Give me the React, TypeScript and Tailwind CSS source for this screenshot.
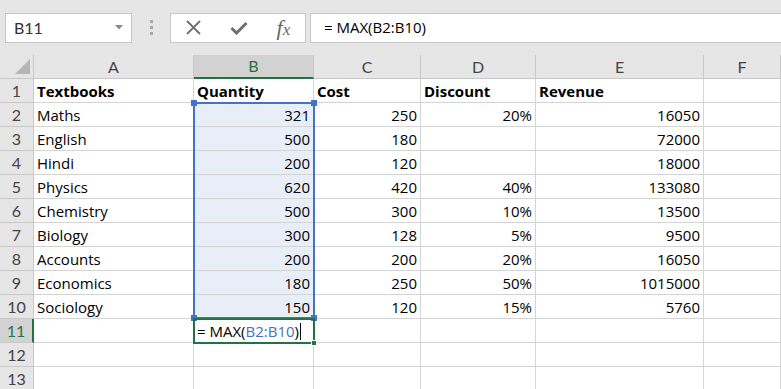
import React from "react";

const cols = ["A", "B", "C", "D", "E", "F"];
const widths = "grid-cols-[34px_160px_120px_107px_115px_168px_1fr]";

type Row = [string, string, string, string, string];
const data: Row[] = [
  ["Maths", "321", "250", "20%", "16050"],
  ["English", "500", "180", "", "72000"],
  ["Hindi", "200", "120", "", "18000"],
  ["Physics", "620", "420", "40%", "133080"],
  ["Chemistry", "500", "300", "10%", "13500"],
  ["Biology", "300", "128", "5%", "9500"],
  ["Accounts", "200", "200", "20%", "16050"],
  ["Economics", "180", "250", "50%", "1015000"],
  ["Sociology", "150", "120", "15%", "5760"],
];

const cellBase = "h-[24px] border-r border-b border-[#d4d4d4] flex items-center overflow-hidden whitespace-nowrap text-[15px] text-black font-['Open_Sans',sans-serif] pt-[1px]";

function RowHeader({ n, active }: { n: number; active?: boolean }) {
  return (
    <div
      className={
        "h-[24px] border-b border-[#c8c8c8] flex items-center justify-center text-[16px] " +
        (active
          ? "bg-[#d2d2d2] text-[#217346] border-r-2 border-r-[#217346]"
          : "bg-[#e6e6e6] text-[#444] border-r border-r-[#c8c8c8]")
      }
    >
      {n}
    </div>
  );
}

export default function App() {
  return (
    <div className="w-[781px] h-[389px] overflow-hidden bg-white font-['Lato','Noto_Sans',sans-serif]">
      {/* Formula bar */}
      <div className="h-[55px] bg-[#e6e6e6] flex items-center pl-[5px]">
        <div className="w-[127px] h-[30px] bg-white border border-[#c6c6c6] flex items-center justify-between pl-[8px] pr-[8px]">
          <span className="text-[16px] text-[#333]">B11</span>
          <svg width="8" height="5" viewBox="0 0 8 5"><path d="M0 0h8L4 4.5z" fill="#8a8a8a" /></svg>
        </div>
        <div className="w-[38px] flex flex-col items-center gap-[3px]">
          <span className="w-[3px] h-[3px] bg-[#a8a8a8]" />
          <span className="w-[3px] h-[3px] bg-[#a8a8a8]" />
          <span className="w-[3px] h-[3px] bg-[#a8a8a8]" />
        </div>
        <div className="w-[136px] h-[30px] bg-white border border-[#c6c6c6] flex items-center">
          <div className="w-[46px] flex justify-center">
            <svg width="15" height="15" viewBox="0 0 15 15"><path d="M1 1L14 14M14 1L1 14" stroke="#6f6f6f" strokeWidth="1.8" /></svg>
          </div>
          <div className="w-[46px] flex justify-center">
            <svg width="18" height="14" viewBox="0 0 18 14"><path d="M1.5 7L6.5 12L16.5 2" stroke="#6f6f6f" strokeWidth="3" fill="none" /></svg>
          </div>
          <div className="w-[44px] flex justify-center">
            <span className="font-['Liberation_Serif',serif] italic text-[22px] text-[#666] leading-none">
              f<span className="text-[17px]">x</span>
            </span>
          </div>
        </div>
        <div className="ml-[4px] flex-1 h-[30px] bg-white border border-r-0 border-[#c6c6c6] flex items-center pl-[13px] text-[15px] text-black font-['Open_Sans',sans-serif]">
          = MAX(B2:B10)
        </div>
      </div>

      {/* Grid */}
      <div className="relative">
        <div className={"grid " + widths}>
          {/* corner */}
          <div className="h-[24px] bg-[#e6e6e6] border-r border-b border-[#c8c8c8] flex items-end justify-end pr-[3px] pb-[4px]">
            <svg width="15" height="15" viewBox="0 0 15 15"><path d="M15 0V15H0z" fill="#b5b5b5" /></svg>
          </div>
          {cols.map((c) =>
            c === "B" ? (
              <div key={c} className="h-[24px] bg-[#d2d2d2] border-r border-[#c8c8c8] border-b-2 border-b-[#217346] flex items-center justify-center text-[16px] text-[#217346]">
                {c}
              </div>
            ) : (
              <div key={c} className="h-[24px] bg-[#e6e6e6] border-r border-b border-[#c8c8c8] flex items-center justify-center text-[16px] text-[#444]">
                {c}
              </div>
            )
          )}

          {/* row 1 */}
          <RowHeader n={1} />
          <div className={cellBase + " pl-[3px] font-bold"}>Textbooks</div>
          <div className={cellBase + " pl-[3px] font-bold"}>Quantity</div>
          <div className={cellBase + " pl-[3px] font-bold"}>Cost</div>
          <div className={cellBase + " pl-[3px] font-bold"}>Discount</div>
          <div className={cellBase + " pl-[3px] font-bold"}>Revenue</div>
          <div className={cellBase}></div>

          {data.map((r, i) => (
            <React.Fragment key={i}>
              <RowHeader n={i + 2} />
              <div className={cellBase + " pl-[3px]"}>{r[0]}</div>
              <div className={cellBase + " justify-end pr-[3px] bg-[#e8eef8]"}>{r[1]}</div>
              <div className={cellBase + " justify-end pr-[3px]"}>{r[2]}</div>
              <div className={cellBase + " justify-end pr-[3px]"}>{r[3]}</div>
              <div className={cellBase + " justify-end pr-[3px]"}>{r[4]}</div>
              <div className={cellBase}></div>
            </React.Fragment>
          ))}

          {/* row 11 */}
          <RowHeader n={11} active />
          <div className={cellBase}></div>
          <div className={cellBase + " pl-[3px]"}>
            = MAX(<span className="text-[#4472c4]">B2:B10</span>)<span className="inline-block w-[1px] h-[17px] bg-black ml-[1px]" />
          </div>
          <div className={cellBase}></div>
          <div className={cellBase}></div>
          <div className={cellBase}></div>
          <div className={cellBase}></div>

          {[12, 13].map((n) => (
            <React.Fragment key={n}>
              <RowHeader n={n} />
              <div className={cellBase}></div>
              <div className={cellBase}></div>
              <div className={cellBase}></div>
              <div className={cellBase}></div>
              <div className={cellBase}></div>
              <div className={cellBase}></div>
            </React.Fragment>
          ))}
        </div>

        {/* selection overlay B2:B10 */}
        <div className="absolute left-[193px] top-[47px] w-[122px] h-[217px] border-2 border-[#4472c4] pointer-events-none">
          <span className="absolute -left-[4px] -top-[4px] w-[6px] h-[6px] bg-[#4472c4]" />
          <span className="absolute -right-[4px] -top-[4px] w-[6px] h-[6px] bg-[#4472c4]" />
          <span className="absolute -left-[4px] -bottom-[4px] w-[6px] h-[6px] bg-[#4472c4]" />
          <span className="absolute -right-[4px] -bottom-[4px] w-[6px] h-[6px] bg-[#4472c4]" />
        </div>
        {/* active cell B11 */}
        <div className="absolute left-[193px] top-[263px] w-[122px] h-[26px] border-2 border-[#217346] pointer-events-none">
          <span className="absolute -right-[4px] -bottom-[4px] w-[6px] h-[6px] bg-[#217346] border border-white" />
        </div>
      </div>
    </div>
  );
}
